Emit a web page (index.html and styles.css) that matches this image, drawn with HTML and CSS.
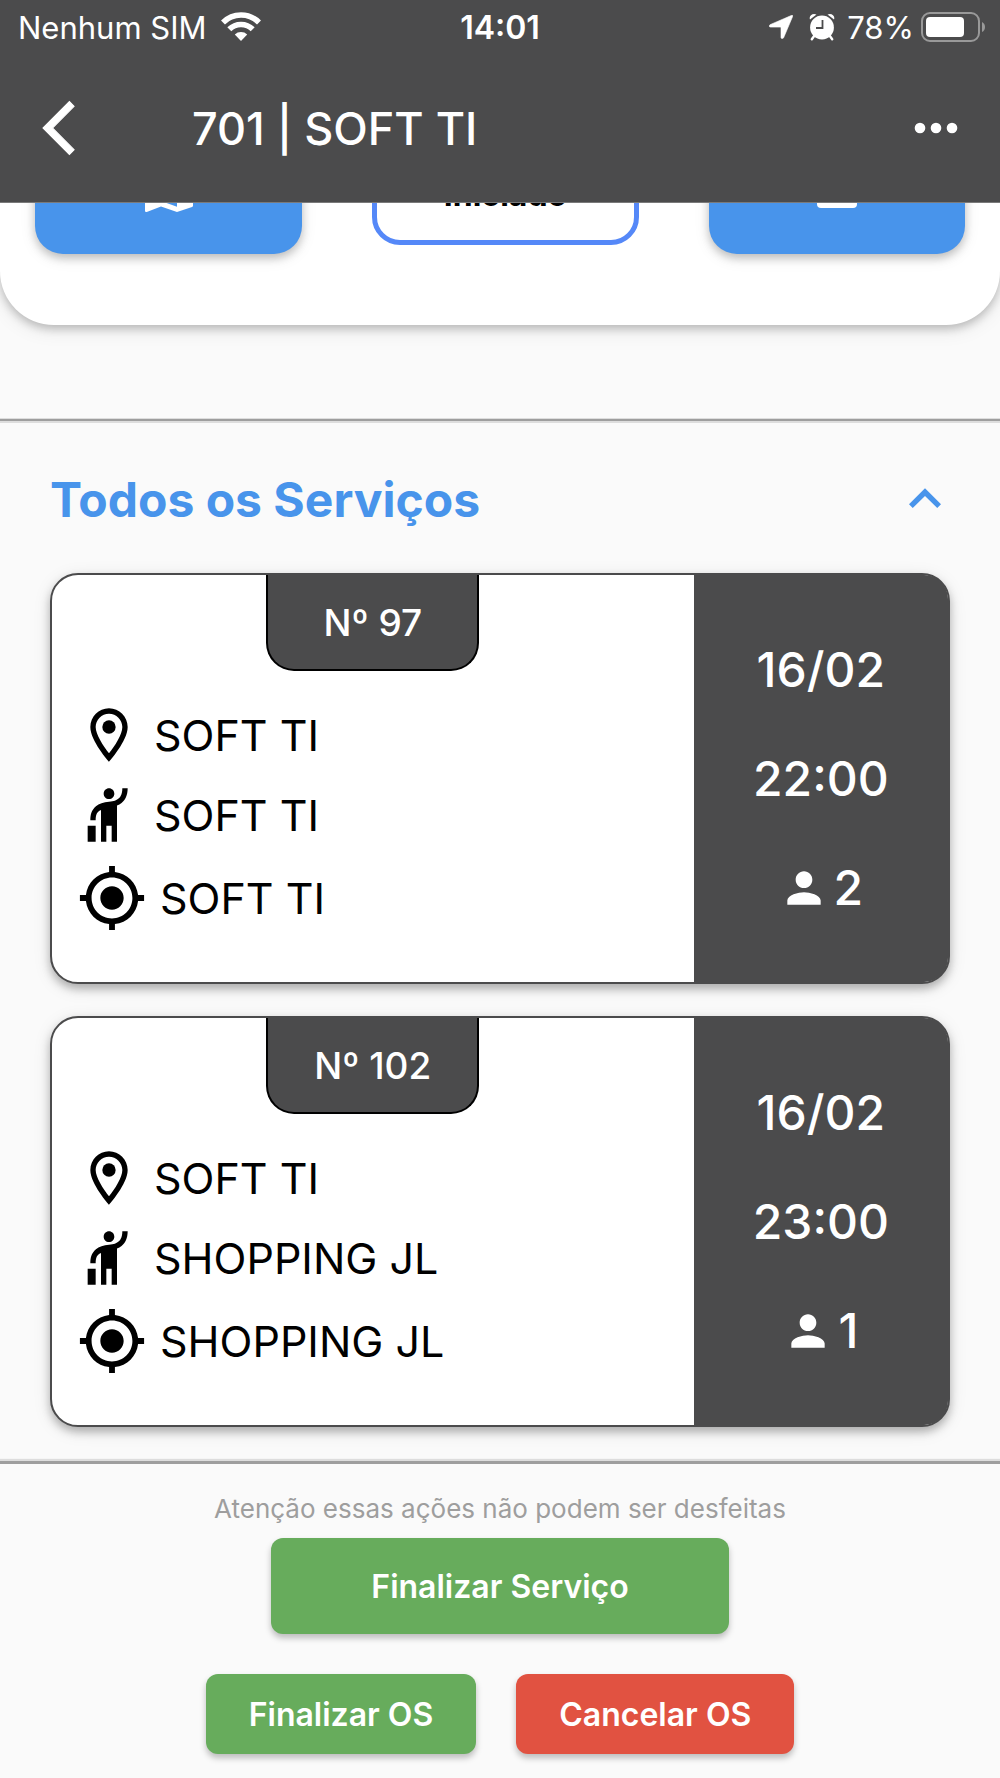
FILE: index.html
```html
<!DOCTYPE html>
<html lang="pt-BR">
<head>
<meta charset="utf-8">
<meta name="viewport" content="width=device-width, initial-scale=1">
<title>701 | SOFT TI</title>
<link rel="stylesheet" href="styles.css">
</head>
<body>
<svg class="sprite" aria-hidden="true">
  <symbol id="pin" viewBox="0 0 24 24"><path d="M12 2C8.130 2 5 5.130 5 9c0 5.250 7 13 7 13s7-7.750 7-13c0-3.870-3.130-7-7-7zM7 9c0-2.760 2.240-5 5-5s5 2.240 5 5c0 2.880-2.880 7.190-5 9.880C9.920 16.210 7 11.850 7 9z"/><circle cx="12" cy="9" r="2.500"/></symbol>
  <symbol id="hail" viewBox="0 0 24 24"><path d="M12 6c-1.100 0-2-.900-2-2s.900-2 2-2 2 .900 2 2-.900 2-2 2zm5-4h2c0 2.700-.930 4.410-2.300 5.500-.500.400-1.100.700-1.700.900V22h-2v-6h-2v6H9V10.100c-.300.100-.500.200-.600.300-.530.410-1.400 1.010-1.400 3.600H5c0-2.060.350-3.780 2.110-5.290C8.210 7.810 10 7 12 7s2.680-.460 3.480-1.060C15.960 5.550 17 4.760 17 2zM4 16h3v6H4v-6z"/></symbol>
  <symbol id="target" viewBox="0 0 24 24"><path d="M12 8c-2.210 0-4 1.790-4 4s1.790 4 4 4 4-1.790 4-4-1.790-4-4-4zm8.940 3c-.460-4.170-3.770-7.480-7.940-7.940V1h-2v2.060C6.830 3.520 3.520 6.830 3.060 11H1v2h2.060c.460 4.170 3.770 7.480 7.940 7.940V23h2v-2.060c4.170-.460 7.480-3.770 7.940-7.940H23v-2h-2.060zM12 19c-3.870 0-7-3.130-7-7s3.130-7 7-7 7 3.130 7 7-3.130 7-7 7z"/></symbol>
  <symbol id="person" viewBox="0 0 24 24"><path d="M12 12c2.210 0 4-1.790 4-4s-1.790-4-4-4-4 1.790-4 4 1.790 4 4 4zm0 2c-2.670 0-8 1.340-8 4v2h16v-2c0-2.660-5.330-4-8-4z"/></symbol>
</svg>

<header class="topbar">
  <div class="status">
    <div class="status-left">
      <span>Nenhum SIM</span>
      <svg class="wifi" viewBox="0 0 40 30" aria-hidden="true">
        <path d="M20 29 13.800 22.600a9 9 0 0 1 12.400 0z" fill="#fff"/>
        <path d="M8.300 17.300a16.500 16.500 0 0 1 23.400 0M2 10.500a25.500 25.500 0 0 1 36 0" fill="none" stroke="#fff" stroke-width="5.600"/>
      </svg>
    </div>
    <time class="clock">14:01</time>
    <div class="status-right">
      <svg class="location" viewBox="0 0 24 24" aria-hidden="true"><path d="M22.800.300C23.700 0 24 .500 23.700 1.300L14.600 22.800c-.500 1.100-2.600 1-2.600-.300V13c0-.700-.200-.900-.900-.900H1.500C.100 12.100-.200 10.300 1 9.700z" fill="#fff" stroke="#fff" stroke-width=".6"/></svg>
      <svg class="alarm" viewBox="0 0 26 28" aria-hidden="true">
        <g fill="#fff"><circle cx="13" cy="14.500" r="11.900"/><path d="M1 6.500C-.500 3 3.500-.500 7.500 1.500zM25 6.500C26.500 3 22.500-.500 18.500 1.500z"/></g>
        <path d="M5.500 22.500 2.800 26.300M20.500 22.500l2.700 3.800" stroke="#fff" stroke-width="2.400" stroke-linecap="round"/>
        <path d="M13.500 7v8H7" fill="none" stroke="#4b4b4c" stroke-width="1.800"/>
      </svg>
      <span>78%</span>
      <svg class="battery" viewBox="0 0 66 32" aria-hidden="true">
        <rect x="2" y="2" width="57" height="28" rx="8" fill="none" stroke="#999" stroke-width="2"/>
        <rect x="6" y="6" width="38" height="20" rx="4" fill="#fff"/>
        <path d="M62 11v10q3-1.500 3-5t-3-5z" fill="#999"/>
      </svg>
    </div>
  </div>
  <div class="appbar">
    <button class="icon-button back" type="button" aria-label="Voltar">
      <svg viewBox="0 0 24 24"><path d="M11.670 3.870 9.900 2.100 0 12l9.900 9.900 1.770-1.770L3.540 12z"/></svg>
    </button>
    <h1>701 | SOFT TI</h1>
    <button class="icon-button" type="button" aria-label="Mais opções">
      <svg viewBox="0 0 24 24"><circle cx="6" cy="12" r="2"/><circle cx="12" cy="12" r="2"/><circle cx="18" cy="12" r="2"/></svg>
    </button>
  </div>
</header>

<main>
  <section class="panel">
    <button class="tile tile-blue" type="button" aria-label="Mapa">
      <svg viewBox="0 0 24 24"><path d="m20.500 3-.160.030L15 5.100 9 3 3.360 4.900c-.210.070-.360.250-.360.480V20.500c0 .280.220.500.500.500l.160-.030L9 18.900l6 2.100 5.640-1.900c.210-.070.360-.250.360-.480V3.500c0-.280-.220-.500-.500-.500zM15 19l-6-2.110V5l6 2.110V19z"/></svg>
    </button>
    <div class="tile tile-outline">Iniciado</div>
    <button class="tile tile-blue" type="button" aria-label="Detalhes">
      <svg viewBox="0 0 24 24"><rect x="4.500" y="4.500" width="15" height="15" rx="1.500"/></svg>
    </button>
  </section>

  <section class="services">
    <div class="services-head">
      <h2>Todos os Serviços</h2>
      <button class="icon-button" type="button" aria-label="Recolher serviços">
        <svg viewBox="0 0 24 24"><path d="m12 8-6 6 1.410 1.410L12 10.830l4.590 4.580L18 14z"/></svg>
      </button>
    </div>

    <article class="card">
      <div class="card-main">
        <h3 class="badge">Nº 97</h3>
        <ul class="stops">
          <li><svg><use href="#pin"/></svg>SOFT TI</li>
          <li><svg><use href="#hail"/></svg>SOFT TI</li>
          <li><svg class="large"><use href="#target"/></svg>SOFT TI</li>
        </ul>
      </div>
      <div class="card-side">
        <span>16/02</span>
        <span>22:00</span>
        <span class="people"><svg><use href="#person"/></svg>2</span>
      </div>
    </article>

    <article class="card">
      <div class="card-main">
        <h3 class="badge">Nº 102</h3>
        <ul class="stops">
          <li><svg><use href="#pin"/></svg>SOFT TI</li>
          <li><svg><use href="#hail"/></svg>SHOPPING JL</li>
          <li><svg class="large"><use href="#target"/></svg>SHOPPING JL</li>
        </ul>
      </div>
      <div class="card-side">
        <span>16/02</span>
        <span>23:00</span>
        <span class="people"><svg><use href="#person"/></svg>1</span>
      </div>
    </article>
  </section>
</main>

<footer class="actions">
  <p>Atenção essas ações não podem ser desfeitas</p>
  <button class="action action-wide" type="button">Finalizar Serviço</button>
  <div class="action-row">
    <button class="action" type="button">Finalizar OS</button>
    <button class="action action-danger" type="button">Cancelar OS</button>
  </div>
</footer>
</body>
</html>
```
FILE: styles.css
```css
:root {
  --dark: #4b4b4c;
  --blue: #4894eb;
  --green: #67ac5c;
  --red: #e15241;
  --line: #9e9e9e;
  --page: #fafafa;
}

* {
  box-sizing: border-box;
}

body {
  margin: 0;
  background: var(--page);
  color: #000;
  font-family: Inter, "Liberation Sans", sans-serif;
}

h1, h2, h3, p, ul {
  margin: 0;
  padding: 0;
}

button {
  border: 0;
  padding: 0;
  background: none;
  color: inherit;
  font: inherit;
}

svg {
  display: block;
  flex: none;
  fill: currentColor;
}

.sprite {
  display: none;
}

/* Top bar */

.topbar {
  position: sticky;
  top: 0;
  z-index: 1;
  background: var(--dark);
  color: #fff;
  border-bottom: 1px solid #7a7a7a;
}

.status {
  display: grid;
  grid-template-columns: 1fr auto 1fr;
  align-items: center;
  height: 54px;
  padding: 0 18px;
  font-size: 31px;
}

.status-left,
.status-right {
  display: flex;
  align-items: center;
}

.status-left {
  gap: 14px;
}

.status-right {
  justify-content: flex-end;
}

.clock {
  font-size: 32px;
  font-weight: 600;
}

.wifi {
  width: 40px;
  height: 30px;
}

.location {
  width: 24px;
  height: 24px;
  margin-right: 16px;
}

.alarm {
  width: 26px;
  height: 28px;
  margin-right: 12px;
}

.battery {
  width: 66px;
  height: 32px;
  margin-left: 6px;
  margin-right: -4px;
}

.appbar {
  display: flex;
  align-items: center;
  height: 148px;
  padding: 0 32px 0 43px;
}

.back svg {
  stroke: currentColor;
  stroke-width: 0.4;
  overflow: visible;
}

.appbar h1 {
  flex: 1;
  margin-left: 85px;
  font-size: 45px;
  font-weight: 500;
}

.icon-button,
.icon-button svg {
  width: 64px;
  height: 64px;
}

/* Panel partly scrolled under the top bar */

.panel {
  display: grid;
  grid-template-columns: 267fr 267fr 256fr;
  column-gap: 70px;
  align-items: start;
  margin-top: -81px;
  padding: 0 35px 71px;
  border-radius: 0 0 54px 54px;
  background: #fff;
  box-shadow: 0 4px 8px rgba(0, 0, 0, .2), 0 4px 20px rgba(0, 0, 0, .1);
}

.tile {
  display: flex;
  align-items: center;
  justify-content: center;
  height: 132px;
  border-radius: 28px;
}

.tile svg {
  width: 64px;
  height: 64px;
}

.tile-blue {
  background: var(--blue);
  color: #fff;
  box-shadow: 0 4px 8px rgba(0, 0, 0, .2), 0 4px 16px rgba(0, 0, 0, .1);
}

.tile-outline {
  height: 123px;
  border: 5px solid #5588f8;
  background: #fff;
  font-size: 32px;
  line-height: 36px;
  font-weight: 700;
  padding-top: 22px;
}

/* Services */

.services {
  display: flex;
  flex-direction: column;
  gap: 32px;
  margin-top: 94px;
  padding: 0 50px 34px;
  border-top: 2px solid var(--line);
  box-shadow: 0 -1px 0 #ddd, inset 0 2px 0 #ddd;
}

.services-head {
  display: flex;
  align-items: center;
  justify-content: space-between;
  height: 120px;
  margin: 18px -7px -18px 0;
  color: var(--blue);
}

.services-head h2 {
  font-size: 48px;
  font-weight: 700;
}

.card {
  display: grid;
  grid-template-columns: 641fr 254fr;
  min-height: 411px;
  border: 2px solid var(--dark);
  border-radius: 28px;
  background: #fff;
  box-shadow: 0 5px 8px rgba(0, 0, 0, .25), 0 4px 18px rgba(0, 0, 0, .1);
}

.card-main {
  display: flex;
  flex-direction: column;
  align-items: center;
}

.badge {
  display: flex;
  align-items: center;
  justify-content: center;
  width: 213px;
  height: 96px;
  border: 2px solid #000;
  border-top: 0;
  border-radius: 0 0 28px 28px;
  background: var(--dark);
  color: #fff;
  font-size: 37px;
  font-weight: 500;
}

.stops {
  display: flex;
  flex-direction: column;
  gap: 16px;
  align-self: stretch;
  margin-top: 32px;
  padding-left: 25px;
  list-style: none;
  font-size: 43px;
}

.stops li {
  display: flex;
  align-items: center;
  gap: 13px;
}

.stops svg {
  width: 64px;
  height: 64px;
}

.stops .large {
  width: 70px;
  height: 70px;
}

.card-side {
  display: flex;
  flex-direction: column;
  align-items: center;
  justify-content: center;
  gap: 49px;
  border-radius: 0 24px 24px 0;
  background: var(--dark);
  color: #fff;
  font-size: 48px;
  line-height: 60px;
  font-weight: 500;
}

.people {
  display: flex;
  align-items: center;
  gap: 5px;
}

.people svg {
  width: 50px;
  height: 50px;
}

/* Footer actions */

.actions {
  display: flex;
  flex-direction: column;
  align-items: center;
  padding: 28px 24px 24px;
  border-top: 3px solid var(--line);
  box-shadow: 0 -2px 1px #ddd;
}

.actions p {
  margin-bottom: 12px;
  color: #9e9e9e;
  font-size: 26px;
  line-height: 34px;
}

.action {
  height: 80px;
  padding: 0 43px;
  border-radius: 12px;
  background: var(--green);
  color: #fff;
  font-size: 32px;
  font-weight: 600;
  box-shadow: 0 4px 6px rgba(0, 0, 0, .25);
}

.action-wide {
  height: 96px;
  padding: 0 100px;
}

.action-row {
  display: flex;
  gap: 40px;
  margin-top: 40px;
}

.action-danger {
  background: var(--red);
}
```
